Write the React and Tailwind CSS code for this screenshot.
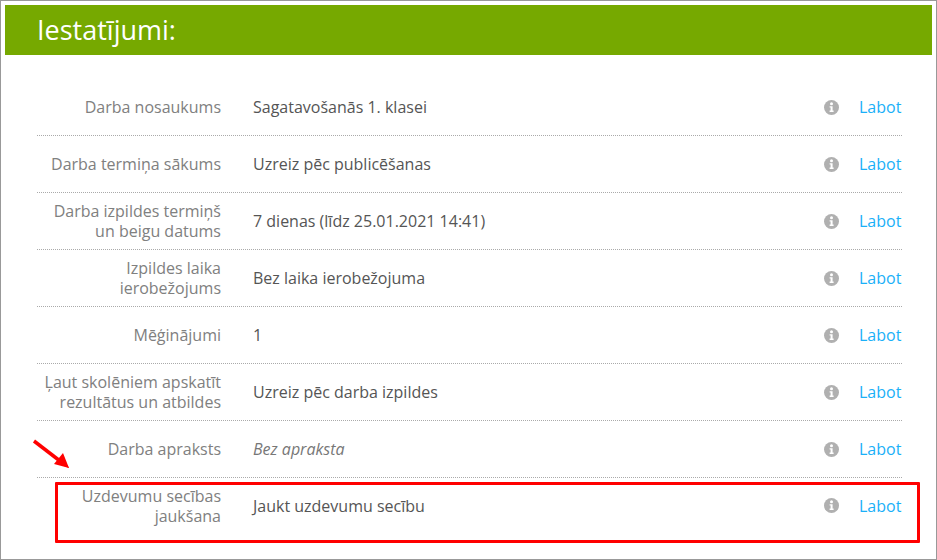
const rows = [
  { label: ["Darba nosaukums"], value: "Sagatavošanās 1. klasei" },
  { label: ["Darba termiņa sākums"], value: "Uzreiz pēc publicēšanas" },
  { label: ["Darba izpildes termiņš", "un beigu datums"], value: "7 dienas (līdz 25.01.2021 14:41)" },
  { label: ["Izpildes laika", "ierobežojums"], value: "Bez laika ierobežojuma" },
  { label: ["Mēģinājumi"], value: "1" },
  { label: ["Ļaut skolēniem apskatīt", "rezultātus un atbildes"], value: "Uzreiz pēc darba izpildes" },
  { label: ["Darba apraksts"], value: "Bez apraksta", italic: true },
  { label: ["Uzdevumu secības", "jaukšana"], value: "Jaukt uzdevumu secību", last: true },
];

function InfoIcon() {
  return (
    <svg width="15" height="15" viewBox="0 0 15 15" className="block">
      <circle cx="7.5" cy="7.5" r="7.5" fill="#b0b0b0" />
      <circle cx="7.5" cy="3.8" r="1.5" fill="#fff" />
      <path d="M5.6 6.2h3v4.4h1v1.4H5.6v-1.4h1v-3h-1z" fill="#fff" />
    </svg>
  );
}

function Row({ row }) {
  return (
    <div
      className={
        "flex items-center " +
        (row.last ? "h-[55px]" : "h-[57px] border-b border-dotted border-[#aaa]")
      }
    >
      <div className="w-[184px] text-right text-[#808080] leading-[20px]">
        {row.label.map((line) => (
          <div key={line}>{line}</div>
        ))}
      </div>
      <div className={"ml-[32px] flex-1 " + (row.italic ? "text-[#777] italic" : "text-[#555]")}>
        {row.value}
      </div>
      <InfoIcon />
      <a className="ml-[20px] w-[43px] text-[#1ab0f8]">Labot</a>
    </div>
  );
}

export default function App() {
  return (
    <div
      className="relative w-[937px] h-[560px] bg-white border border-[#999] p-[4px] text-[16px]"
      style={{ fontFamily: '"Open Sans", sans-serif' }}
    >
      <h1 className="h-[50px] bg-[#76a900] pl-[32px] text-white text-[27px] leading-[50px]">
        Iestatījumi:
      </h1>

      <div className="mt-[23px] pt-px ml-[32px] w-[865px]">
        {rows.map((row) => (
          <Row key={row.value} row={row} />
        ))}
      </div>

      {/* red marker and arrow drawn over the page */}
      <div className="absolute left-[54px] top-[481px] w-[865px] h-[61px] border-[3px] border-[#f00] rounded-[1px]" />
      <svg className="absolute left-[29px] top-[436px]" width="44" height="36" viewBox="0 0 44 36">
        <path d="M4 4L30 24" stroke="#f00" strokeWidth="3.5" />
        <path d="M39 31L27 26L32 20z" fill="#f00" />
        <path d="M39 31L24 27L33 16z" fill="#f00" />
      </svg>
    </div>
  );
}
